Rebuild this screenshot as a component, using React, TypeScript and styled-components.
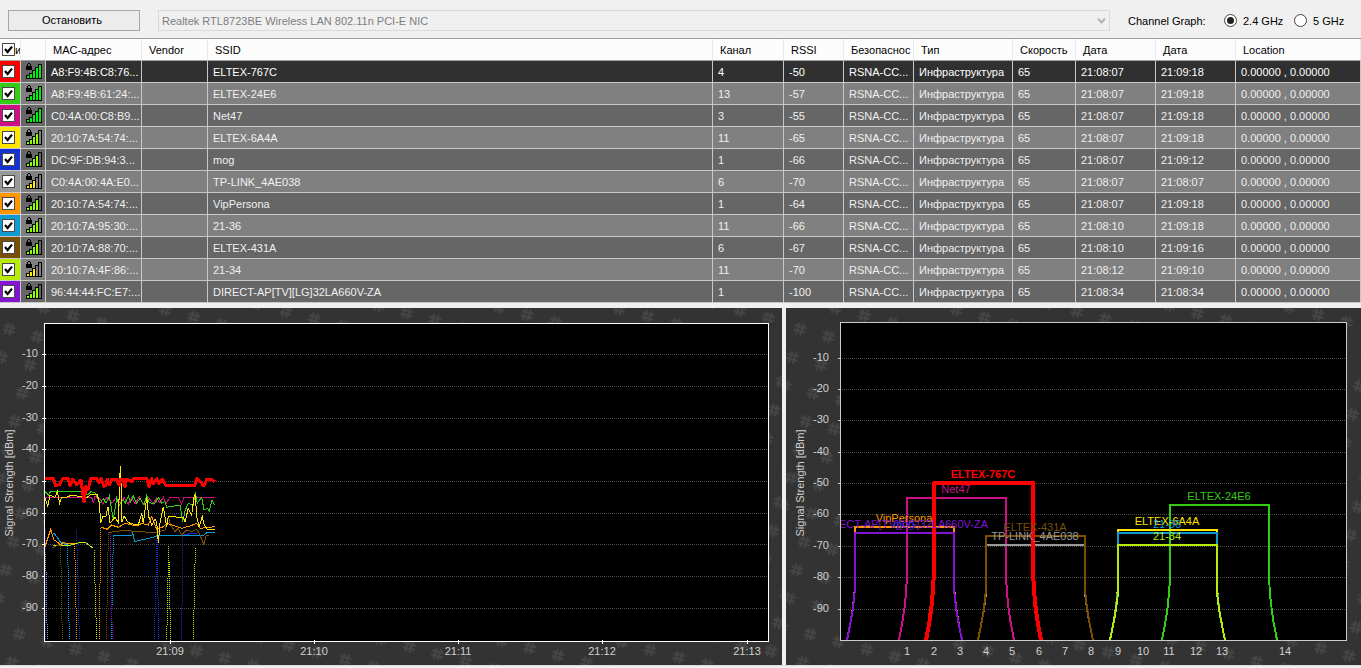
import React, { useState } from "react";
import styled, { createGlobalStyle } from "styled-components";

const font = '"Liberation Sans", Arial, sans-serif';

const GlobalStyle = createGlobalStyle`
  *, *::before, *::after { box-sizing: border-box; }
  body {
    margin: 0;
    background: #f0f0f0;
    color: #000;
    font: 11px/14px ${font};
  }
  button, select, input { font: inherit; margin: 0; }
`;

/* ---------- toolbar ---------- */

const Toolbar = styled.header`
  display: flex;
  align-items: center;
  padding: 10px 0 7px 8px;
`;

const StopButton = styled.button`
  width: 132px;
  height: 21px;
  padding: 0 4px 2px 0;
  border: 1px solid #a6a6a6;
  background: #ececec;
  color: #000;
`;

const AdapterField = styled.div`
  position: relative;
  flex: 1;
  min-width: 0;
  margin: 0 18px;
`;

const AdapterSelect = styled.select`
  display: block;
  appearance: none;
  width: 100%;
  height: 21px;
  padding: 0 20px 0 3px;
  border: 1px solid #d9d9d9;
  border-radius: 0;
  background: #f0f0f0;
  color: #7d7d7d;
  opacity: 1;
`;

const Chevron = styled.svg`
  position: absolute;
  right: 4px;
  top: 7px;
  pointer-events: none;
`;

const GraphLabel = styled.span`
  width: 96px;
`;

const Option = styled.label<{ $width: number }>`
  display: flex;
  align-items: center;
  gap: 6px;
  width: ${(p) => p.$width}px;
  white-space: nowrap;
`;

const Radio = styled.input`
  appearance: none;
  display: grid;
  place-items: center;
  width: 13px;
  height: 13px;
  border: 1px solid #444;
  border-radius: 50%;
  background: #fff;
  &:checked::before {
    content: "";
    width: 7px;
    height: 7px;
    border-radius: 50%;
    background: #222;
  }
`;

/* ---------- network table ---------- */

const Table = styled.table`
  width: 100%;
  table-layout: fixed;
  border-spacing: 0;
  border-top: 1px solid #a0a0a0;
`;

const Th = styled.th<{ $tight?: boolean }>`
  height: 22px;
  padding: ${(p) => (p.$tight ? "0 0 0 2px" : "0 0 0 7px")};
  border-bottom: 1px solid #a0a0a0;
  border-right: 1px solid #e2eaf4;
  background: #fcfcfc;
  font-weight: normal;
  text-align: left;
  white-space: nowrap;
  overflow: hidden;
`;

const Row = styled.tr<{ $selected: boolean }>`
  background: #666;
  color: ${(p) => (p.$selected ? "#fff" : "#f0f0f0")};
  &:nth-child(even) { background: #808080; }
`;

const Td = styled.td<{ $fill?: string; $pad?: number }>`
  height: 22px;
  padding: 0 0 0 ${(p) => p.$pad ?? 5}px;
  border-bottom: 1px solid #c8c8c8;
  border-right: 1px solid #c8c8c8;
  background: ${(p) => p.$fill ?? "transparent"};
  white-space: nowrap;
  overflow: hidden;
`;

const Tick = styled.label`
  position: relative;
  display: flex;
  height: 13px;
`;

const TickBox = styled.input`
  appearance: none;
  flex: none;
  width: 13px;
  height: 13px;
  border: 1px solid #4a4a4a;
  background: #fff;
  & + svg { display: none; }
  &:checked + svg { display: block; }
`;

const TickMark = styled.svg`
  position: absolute;
  left: 0;
  top: 0;
  pointer-events: none;
`;

const SignalSvg = styled.svg`
  display: block;
  margin-bottom: 1px;
`;

/* ---------- charts ---------- */

const Charts = styled.main`
  display: grid;
  grid-template-columns: 782fr 575fr;
  gap: 4px;
  margin-top: 5px;
  border-bottom: 1px solid #dcdcdc;
`;

const ChartSvg = styled.svg`
  display: block;
  width: 100%;
  height: auto;
  background: #333;
  font: 11px ${font};
`;

type Network = {
  color: string;
  bars: number;
  mac: string;
  ssid: string;
  channel: number;
  rssi: number;
  first: string;
  last: string;
};

const networks: Network[] = [
  { color: "#ff0000", bars: 5, mac: "A8:F9:4B:C8:76...", ssid: "ELTEX-767C", channel: 4, rssi: -50, first: "21:08:07", last: "21:09:18" },
  { color: "#32cd14", bars: 5, mac: "A8:F9:4B:61:24:...", ssid: "ELTEX-24E6", channel: 13, rssi: -57, first: "21:08:07", last: "21:09:18" },
  { color: "#cf0f85", bars: 5, mac: "C0:4A:00:C8:B9...", ssid: "Net47", channel: 3, rssi: -55, first: "21:08:07", last: "21:09:18" },
  { color: "#ffe600", bars: 4, mac: "20:10:7A:54:74:...", ssid: "ELTEX-6A4A", channel: 11, rssi: -65, first: "21:08:07", last: "21:09:18" },
  { color: "#1432d2", bars: 4, mac: "DC:9F:DB:94:3...", ssid: "mog", channel: 1, rssi: -66, first: "21:08:07", last: "21:09:12" },
  { color: "#999999", bars: 3, mac: "C0:4A:00:4A:E0...", ssid: "TP-LINK_4AE038", channel: 6, rssi: -70, first: "21:08:07", last: "21:08:07" },
  { color: "#ff9600", bars: 4, mac: "20:10:7A:54:74:...", ssid: "VipPersona", channel: 1, rssi: -64, first: "21:08:07", last: "21:09:18" },
  { color: "#0f9bd2", bars: 4, mac: "20:10:7A:95:30:...", ssid: "21-36", channel: 11, rssi: -66, first: "21:08:10", last: "21:09:18" },
  { color: "#785000", bars: 4, mac: "20:10:7A:88:70:...", ssid: "ELTEX-431A", channel: 6, rssi: -67, first: "21:08:10", last: "21:09:16" },
  { color: "#b9eb0a", bars: 3, mac: "20:10:7A:4F:86:...", ssid: "21-34", channel: 11, rssi: -70, first: "21:08:12", last: "21:09:10" },
  { color: "#8214d2", bars: 4, mac: "96:44:44:FC:E7:...", ssid: "DIRECT-AP[TV][LG]32LA660V-ZA", channel: 1, rssi: -100, first: "21:08:34", last: "21:08:34" },
];

const columns: [string, number | undefined][] = [
  ["", 25], ["MAC-адрес", 96], ["Vendor", 66], ["SSID", undefined], ["Канал", 71],
  ["RSSI", 60], ["Безопаснос", 70], ["Тип", 99], ["Скорость", 63], ["Дата", 80],
  ["Дата", 80], ["Location", 125],
];

function CheckBox({ name, checked, onChange, text }: { name: string; checked: boolean; onChange: () => void; text?: string }) {
  return (
    <Tick>
      <TickBox type="checkbox" aria-label={name} checked={checked} onChange={onChange} />
      <TickMark width="13" height="13" viewBox="0 0 13 13">
        <path d="M3 6l2.6 3L10 3.6" fill="none" stroke="#000" strokeWidth="2.2" />
      </TickMark>
      {text}
    </Tick>
  );
}

const barTops = [13, 11, 8, 5, 2];

function Signal({ bars }: { bars: number }) {
  const fill = bars === 5 ? "#00f014" : bars === 4 ? "#8cff00" : "#fff000";
  return (
    <SignalSvg width="16" height="16" viewBox="0 0 16 16" shapeRendering="crispEdges">
      {barTops.map((top, i) => (
        <rect
          key={top}
          x={i * 3 + 0.5}
          y={top - 0.5}
          width="3"
          height={16 - top}
          stroke="#000"
          fill={i < bars ? fill : "none"}
        />
      ))}
      <path d="M0 3h6v4H0zM1 1h1v2H1zM4 1h1v2H4zM2 0h2v1H2z" fill="#000" />
    </SignalSvg>
  );
}

function Backdrop({ id, x, width }: { id: string; x: number; width: number }) {
  return (
    <>
      <defs>
        <pattern
          id={id}
          width="29.25"
          height="29.25"
          patternUnits="userSpaceOnUse"
          patternTransform={`translate(${x} 21) rotate(14.8) translate(-14.6 -14.6)`}
        >
          <path
            d="M12.6 8.6l-.6 12M17 8.6l-.6 12M8.6 12.4h12M8.6 16.8h12"
            fill="none"
            stroke="#454545"
            strokeWidth="2.2"
          />
        </pattern>
      </defs>
      <rect width={width} height="357" fill={`url(#${id})`} />
    </>
  );
}

function Frame({ left, right, top, bottom, levels, color, labelX, titleX, inset }: {
  left: number; right: number; top: number; bottom: number; levels: number[];
  color: string; labelX: number; titleX: number; inset: number;
}) {
  return (
    <>
      <rect x={left + 0.5} y={top + 0.5} width={right - left} height={bottom - top} fill="#000" />
      {levels.map((y, i) => (
        <g key={y}>
          <path d={`M${left + 2} ${y + 0.5}H${right}`} stroke="#4c4c4c" strokeDasharray="1 1" shapeRendering="crispEdges" />
          <path d={`M${left - 2} ${y + 0.5}h${inset}`} stroke={color} shapeRendering="crispEdges" />
          <text x={labelX} y={y + 3} textAnchor="end" fill="#d0d0d0">{`-${(i + 1) * 10}`}</text>
        </g>
      ))}
      <text transform={`translate(${titleX} 175) rotate(-90)`} textAnchor="middle" fill="#d0d0d0">
        Signal Strength [dBm]
      </text>
      <rect
        x={left + 0.5}
        y={top + 0.5}
        width={right - left}
        height={bottom - top}
        fill="none"
        stroke={color}
        shapeRendering="crispEdges"
      />
    </>
  );
}

/* Trace points are stored at three units per pixel, from the 152px line down. */
const parse = (points: string) =>
  points.split(" ").map((p) => {
    const [x, y] = p.split(",").map(Number);
    return [x / 3, 152 + y / 3];
  });

const trace = (points: string) =>
  parse(points)
    .map(([x, y]) => `${x.toFixed(1)},${y.toFixed(1)}`)
    .join(" ");

/* Draws a steep line as one dot on every second pixel row. */
function dots(points: string) {
  const pts = parse(points);
  let d = "";
  for (let i = 1; i < pts.length; i++) {
    const [a, b] = pts[i - 1][1] < pts[i][1] ? [pts[i - 1], pts[i]] : [pts[i], pts[i - 1]];
    for (let y = Math.ceil(a[1] / 2) * 2; y < Math.min(b[1], 333); y += 2) {
      const x = Math.floor(a[0] + ((b[0] - a[0]) * (y - a[1])) / (b[1] - a[1]));
      d += `M${x} ${y}h1v1h-1z`;
    }
  }
  return d;
}

const solid: { color: string; points: string }[] = [
  { color: "#b9eb0a", points: "160,257 205,257 240,247 255,247 280,265" },
  { color: "#cf0f85", points: "135,112 275,112 280,130 285,108 300,118 308,132 320,112 335,130 350,112 360,130 372,112 385,132 395,112 405,132 418,110 430,132 445,112 460,132 470,112 480,130 490,112 498,132 510,112 535,112 545,132 552,112 645,112" },
  { color: "#32cd14", points: "135,95 145,105 152,95 250,94 262,105 272,95 285,98 300,130 310,115 318,130 328,108 340,180 350,115 358,135 370,118 376,130 385,108 392,125 400,108 410,130 420,115 432,135 440,106 446,125 455,130 465,130 475,112 485,130 495,125 500,142 540,135 548,185 556,150 565,130 580,135 586,95 592,130 605,112 612,150 622,145 628,152 636,120 644,135" },
  { color: "#1432d2", points: "548,226 575,220 592,220" },
  { color: "#0f9bd2", points: "160,218 172,232 182,248 203,255" },
  { color: "#0f9bd2", points: "340,227 395,227 398,218 404,245 420,241 460,232 476,225 485,227 610,226 622,217 645,217" },
  { color: "#785000", points: "155,265 170,257 182,255" },
  { color: "#785000", points: "325,216 335,216 380,210 400,215 470,217 495,210 505,170 512,195 525,215 535,205 545,225 560,210 575,215 590,208 600,225 612,255 618,228 628,225" },
  { color: "#ff9600", points: "135,260 152,208 162,240 172,246 182,255 190,247 205,252 222,250" },
  { color: "#ff9600", points: "302,201 322,208 335,195 355,202 375,190 410,198 425,190 445,195 455,170 465,195 470,208 490,200 500,190 515,195 545,205 570,198 590,190 600,205 645,200" },
  { color: "#ffe600", points: "135,115 143,138 150,105 165,112 172,95 179,130 185,112 200,112 215,105 240,110 262,112 270,105 292,103 298,130 302,188 308,170 318,168 324,140 330,190 345,172 355,188 358,90 361,18 364,90 366,185 372,168 385,188 400,192 415,195 425,160 430,190 440,112 446,170 455,195 465,178 470,185 475,250 480,190 490,140 500,200 505,170 550,172 555,185 565,145 575,165 582,110 586,105 590,170 597,200 607,170 613,195 622,208 645,208" },
];

const dotted: { color: string; points: string }[] = [
  { color: "#1432d2", points: "136,208 138,540" },
  { color: "#999999", points: "137,280 142,540" },
  { color: "#785000", points: "182,258 187,540" },
  { color: "#0f9bd2", points: "203,258 208,540" },
  { color: "#ff9600", points: "224,252 230,540" },
  { color: "#1432d2", points: "229,210 233,320 238,540" },
  { color: "#b9eb0a", points: "282,268 290,540" },
  { color: "#ff9600", points: "298,540 302,203" },
  { color: "#785000", points: "319,540 325,216" },
  { color: "#0f9bd2", points: "334,540 340,228" },
  { color: "#8214d2", points: "331,216 337,540" },
  { color: "#1432d2", points: "463,540 471,225 476,540" },
  { color: "#b9eb0a", points: "500,540 506,255 512,540" },
  { color: "#1432d2", points: "545,540 548,228" },
  { color: "#b9eb0a", points: "580,540 586,262" },
];

const strongest =
  "135,55 160,55 167,77 178,74 188,56 205,56 210,78 218,58 230,74 243,60 252,125 258,78 264,90 272,56 290,56 297,68 303,56 312,80 318,75 322,58 328,75 335,58 350,58 358,75 362,58 370,60 375,80 380,58 395,65 402,55 440,55 447,80 455,56 460,72 470,56 477,70 487,58 497,76 585,76 590,56 600,65 612,78 620,58 636,58 644,65";

const times: [string, number][] = [["21:09", 170], ["21:10", 314], ["21:11", 458], ["21:12", 602], ["21:13", 747]];

function TimeGraph() {
  return (
    <ChartSvg viewBox="0 0 782 357" role="img" aria-label="Signal strength over time">
      <Backdrop id="hashLeft" x={9} width={782} />
      <Frame
        left={44} right={768} top={15} bottom={333} color="#fff" labelX={38} titleX={13} inset={4}
        levels={[46, 78, 110, 141, 173, 205, 236, 268, 300]}
      />
      <g shapeRendering="crispEdges">
        {dotted.map((s, i) => (
          <path key={i} d={dots(s.points)} fill={s.color} />
        ))}
      </g>
      <g fill="none" shapeRendering="crispEdges">
        {solid.map((s, i) => (
          <polyline key={i} points={trace(s.points)} stroke={s.color} />
        ))}
        <polyline points={trace(strongest)} stroke="#f00" strokeWidth="3" strokeLinejoin="round" />
      </g>
      {times.map(([label, x]) => (
        <g key={label}>
          <path d={`M${x + 0.5} 332v4`} stroke="#fff" shapeRendering="crispEdges" />
          <text x={x} y="347" textAnchor="middle" fill="#d0d0d0">{label}</text>
        </g>
      ))}
    </ChartSvg>
  );
}

type Shape = { name: string; color: string; channel: number; top: number; strong?: boolean };

const shapes: Shape[] = [
  { name: "ELTEX-24E6", color: "#32cd14", channel: 13, top: 197 },
  { name: "Net47", color: "#cf0f85", channel: 3, top: 190 },
  { name: "ELTEX-6A4A", color: "#ffe600", channel: 11, top: 222 },
  { name: "mog", color: "#1432d2", channel: 1, top: 225 },
  { name: "TP-LINK_4AE038", color: "#999999", channel: 6, top: 237 },
  { name: "VipPersona", color: "#ff9600", channel: 1, top: 219 },
  { name: "21-36", color: "#0f9bd2", channel: 11, top: 225 },
  { name: "ELTEX-431A", color: "#785000", channel: 6, top: 228 },
  { name: "21-34", color: "#b9eb0a", channel: 11, top: 237 },
  { name: "DIRECT-AP[TV][LG]32LA660V-ZA", color: "#8214d2", channel: 1, top: 225 },
  { name: "ELTEX-767C", color: "#ff0000", channel: 4, top: 175, strong: true },
];

const channelCenter = (channel: number) => Math.round(117.9 + 26.27 * (channel - 1));

function envelope({ channel, top }: Shape) {
  const c = channelCenter(channel);
  const bend = Math.round(267 + (top - 190) * 0.35);
  return `M${c - 57} 332Q${c - 50} 300 ${c - 49} ${bend}V${top}H${c + 50}V${bend}Q${c + 51} 300 ${c + 58} 332`;
}

const channelTicks: [number, number][] = [
  [1, 121], [2, 148], [3, 174], [4, 200], [5, 226], [6, 253], [7, 279],
  [8, 305], [9, 332], [10, 357], [11, 383], [12, 410], [13, 436], [14, 499],
];

function ChannelGraph() {
  return (
    <ChartSvg viewBox="0 0 575 357" role="img" aria-label="Signal strength by channel">
      <Backdrop id="hashRight" x={14} width={575} />
      <Frame
        left={54} right={560} top={14} bottom={332} color="#ccc" labelX={43} titleX={18} inset={3}
        levels={[50, 81, 112, 144, 175, 206, 238, 269, 301]}
      />
      <clipPath id="plotArea"><rect x="55" y="15" width="505" height="317" /></clipPath>
      <g clipPath="url(#plotArea)">
        {shapes.map((s) => (
          <path
            key={s.name}
            d={envelope(s)}
            fill="none"
            stroke={s.color}
            strokeWidth={s.strong ? 4 : 2}
            strokeLinejoin="round"
            shapeRendering="crispEdges"
          />
        ))}
        {shapes.map((s) => (
          <text
            key={s.name}
            x={channelCenter(s.channel)}
            y={s.top - 5}
            textAnchor="middle"
            fill={s.color}
            fontWeight={s.strong ? "bold" : "normal"}
          >
            {s.name}
          </text>
        ))}
      </g>
      {channelTicks.map(([n, x]) => (
        <text key={n} x={x} y="347" textAnchor="middle" fill="#d0d0d0">{n}</text>
      ))}
    </ChartSvg>
  );
}

export default function App() {
  const [band, setBand] = useState("2.4");
  const [shown, setShown] = useState(networks.map(() => true));
  const all = shown.every(Boolean);

  return (
    <>
      <GlobalStyle />
      <Toolbar>
        <StopButton type="button">Остановить</StopButton>
        <AdapterField>
          <AdapterSelect disabled aria-label="Adapter">
            <option>Realtek RTL8723BE Wireless LAN 802.11n PCI-E NIC</option>
          </AdapterSelect>
          <Chevron width="9" height="8" viewBox="0 0 9 8">
            <path d="M1 1.5l3.5 4L8 1.5" fill="none" stroke="#b4b4b4" strokeWidth="2" />
          </Chevron>
        </AdapterField>
        <GraphLabel>Channel Graph:</GraphLabel>
        <Option $width={70}>
          <Radio type="radio" name="band" checked={band === "2.4"} onChange={() => setBand("2.4")} />
          2.4 GHz
        </Option>
        <Option $width={67}>
          <Radio type="radio" name="band" checked={band === "5"} onChange={() => setBand("5")} />
          5 GHz
        </Option>
      </Toolbar>

      <Table>
        <colgroup>
          <col style={{ width: 21 }} />
          {columns.map(([, width], i) => (
            <col key={i} style={{ width }} />
          ))}
        </colgroup>
        <thead>
          <tr>
            <Th $tight>
              <CheckBox name="All networks" checked={all} onChange={() => setShown(shown.map(() => !all))} text="и" />
            </Th>
            {columns.map(([title], i) => (
              <Th key={i}>{title}</Th>
            ))}
          </tr>
        </thead>
        <tbody>
          {networks.map((n, i) => {
            const fill = i === 0 ? "#303030" : undefined;
            return (
              <Row key={n.ssid} $selected={i === 0}>
                <Td $fill={n.color} $pad={2}>
                  <CheckBox
                    name={n.ssid}
                    checked={shown[i]}
                    onChange={() => setShown(shown.map((v, j) => (j === i ? !v : v)))}
                  />
                </Td>
                <Td><Signal bars={n.bars} /></Td>
                <Td $fill={fill}>{n.mac}</Td>
                <Td $fill={fill} />
                <Td $fill={fill}>{n.ssid}</Td>
                <Td $fill={fill}>{n.channel}</Td>
                <Td $fill={fill}>{n.rssi}</Td>
                <Td $fill={fill}>RSNA-CC...</Td>
                <Td $fill={fill}>Инфраструктура</Td>
                <Td $fill={fill}>65</Td>
                <Td $fill={fill}>{n.first}</Td>
                <Td $fill={fill}>{n.last}</Td>
                <Td $fill={fill}>0.00000 , 0.00000</Td>
              </Row>
            );
          })}
        </tbody>
      </Table>

      <Charts>
        <TimeGraph />
        <ChannelGraph />
      </Charts>
    </>
  );
}
